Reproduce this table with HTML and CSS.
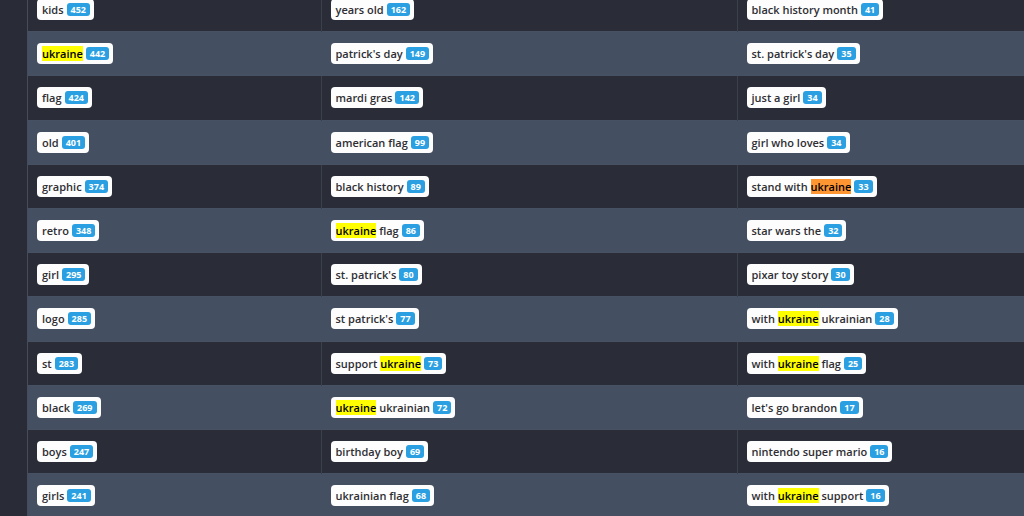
FILE: index.html
```html
<!DOCTYPE html>
<html>
<head>
<meta charset="utf-8">
<link rel="stylesheet" href="styles.css">
</head>
<body>
<div class="page">
  <div class="rail"></div>
  <div class="main">
    <table class="kw">
      <colgroup><col class="c1"><col class="c2"><col class="c3"></colgroup>
      <tbody>
        <tr><td><span class="tag">kids<b class="n">452</b></span></td><td><span class="tag">years old<b class="n">162</b></span></td><td><span class="tag">black history month<b class="n">41</b></span></td></tr>
        <tr><td><span class="tag"><mark>ukraine</mark><b class="n">442</b></span></td><td><span class="tag">patrick's day<b class="n">149</b></span></td><td><span class="tag">st. patrick's day<b class="n">35</b></span></td></tr>
        <tr><td><span class="tag">flag<b class="n">424</b></span></td><td><span class="tag">mardi gras<b class="n">142</b></span></td><td><span class="tag">just a girl<b class="n">34</b></span></td></tr>
        <tr><td><span class="tag">old<b class="n">401</b></span></td><td><span class="tag">american flag<b class="n">99</b></span></td><td><span class="tag">girl who loves<b class="n">34</b></span></td></tr>
        <tr><td><span class="tag">graphic<b class="n">374</b></span></td><td><span class="tag">black history<b class="n">89</b></span></td><td><span class="tag">stand with <mark class="active">ukraine</mark><b class="n">33</b></span></td></tr>
        <tr><td><span class="tag">retro<b class="n">348</b></span></td><td><span class="tag"><mark>ukraine</mark> flag<b class="n">86</b></span></td><td><span class="tag">star wars the<b class="n">32</b></span></td></tr>
        <tr><td><span class="tag">girl<b class="n">295</b></span></td><td><span class="tag">st. patrick's<b class="n">80</b></span></td><td><span class="tag">pixar toy story<b class="n">30</b></span></td></tr>
        <tr><td><span class="tag">logo<b class="n">285</b></span></td><td><span class="tag">st patrick's<b class="n">77</b></span></td><td><span class="tag">with <mark>ukraine</mark> ukrainian<b class="n">28</b></span></td></tr>
        <tr><td><span class="tag">st<b class="n">283</b></span></td><td><span class="tag">support <mark>ukraine</mark><b class="n">73</b></span></td><td><span class="tag">with <mark>ukraine</mark> flag<b class="n">25</b></span></td></tr>
        <tr><td><span class="tag">black<b class="n">269</b></span></td><td><span class="tag"><mark>ukraine</mark> ukrainian<b class="n">72</b></span></td><td><span class="tag">let's go brandon<b class="n">17</b></span></td></tr>
        <tr><td><span class="tag">boys<b class="n">247</b></span></td><td><span class="tag">birthday boy<b class="n">69</b></span></td><td><span class="tag">nintendo super mario<b class="n">16</b></span></td></tr>
        <tr><td><span class="tag">girls<b class="n">241</b></span></td><td><span class="tag">ukrainian flag<b class="n">68</b></span></td><td><span class="tag">with <mark>ukraine</mark> support<b class="n">16</b></span></td></tr>
      </tbody>
    </table>
  </div>
</div>
</body>
</html>
```
FILE: styles.css
```css
html, body {
  margin: 0;
  padding: 0;
  background: #2a2d38;
  overflow: hidden;
  height: 516px;
}
.page {
  display: flex;
  width: 1024px;
  height: 516px;
}
.rail {
  width: 27px;
  flex: none;
  background: #292c37;
  border-right: 1px solid #454c5a;
}
.main {
  flex: 1;
  overflow: hidden;
}
.kw {
  border-collapse: collapse;
  table-layout: fixed;
  width: 1000px;
  margin-top: -13px;
  font-family: "Open Sans", "Noto Sans", sans-serif;
  font-size: 11px;
}
.c1 { width: 293px; }
.c2 { width: 416px; }
.c3 { width: 291px; }
.kw td {
  height: 44.2px;
  padding: 0 0 0 9px;
  box-sizing: border-box;
  border-top: 1px solid #465163;
  border-left: 1px solid #3b404c;
  vertical-align: middle;
}
.kw td:first-child { border-left: none; padding-left: 9px; }
.kw tr:nth-child(even) td { background: #445062; border-left-color: #445062; }
.kw tr:nth-child(odd) td { background: #2a2d38; }
.tag {
  display: inline-block;
  background: #fdfdfd;
  color: #2e2e33;
  font-weight: 600;
  border-radius: 4px;
  padding: 3px 4px 3px 5px;
  line-height: 15px;
  white-space: nowrap;
}
mark {
  background: #ffff00;
  color: #000;
  padding: 0;
}
mark.active { background: #ff9632; }
.n {
  display: inline-block;
  vertical-align: 1px;
  margin-left: 3px;
  background: #2a9fe1;
  color: #fff;
  font-size: 9px;
  font-weight: 700;
  line-height: 13px;
  padding: 0 4px;
  border-radius: 3px;
}
```
